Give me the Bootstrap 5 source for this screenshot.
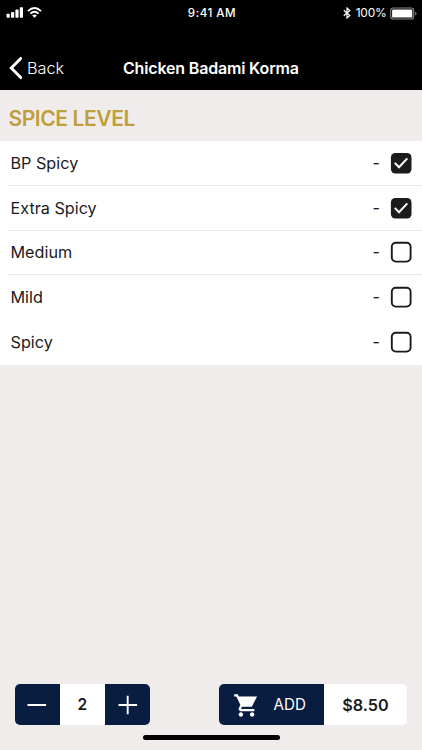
<!DOCTYPE html>
<html lang="en">
<head>
<meta charset="utf-8">
<meta name="viewport" content="width=device-width, initial-scale=1">
<title>Chicken Badami Korma</title>
<link href="https://cdn.jsdelivr.net/npm/bootstrap@5.3.0/dist/css/bootstrap.min.css" rel="stylesheet">
<style>
body{font-family:Inter,"Liberation Sans",sans-serif;background:#f0eceb;color:#1b1a1c;height:750px;overflow:hidden;line-height:1}
svg{display:block;flex:none}
.app-head{height:90px;background:#000;color:#fff}
.status{height:26px;padding:0 6px}
.side{width:120px}
.clock{font-size:11.6px;font-weight:500;letter-spacing:.5px;padding-top:2px}
.power{font-size:12px;letter-spacing:-.25px}
.power span{padding-left:5px}
.power .battery{margin-left:3.5px;margin-right:1px}
.status .power{margin-right:-2px}
.titlebar{height:44px;margin-top:20px;padding-left:8px;padding-right:8px}
.back{width:115px;font-size:16.3px;color:#fff;font-weight:300}
.dish{font-size:16px;font-weight:600;letter-spacing:-.17px;white-space:nowrap}
.section-title{height:51px;padding:6px 0 0 8.4px;font-size:21px;font-weight:600;color:#bf9f3b;letter-spacing:-.4px}
.option{height:44.8px;padding-left:2.5px;padding-right:10px;font-size:16.2px}
.option.lifted{padding-bottom:1px}
.ruled{border-bottom:1.4px solid #e8e8e8}
.box{margin-left:10px}
.order{padding:0 15px 0 14.5px;margin-bottom:10px}
.pill{height:41px;border-radius:5px;overflow:hidden}
.step{width:45px;padding:0;background:#081d40;border:0}
.qty{width:45.5px;font-size:15.5px;font-weight:600;padding-top:1px}
.add{width:105px;background:#081d40;color:#fff;border:0;font-size:15.2px;padding:1px 0 0 14px}
.add span{padding-left:13.5px;padding-top:1px}
.price{width:83px;font-size:16.2px;font-weight:600;padding-top:1px}
.home-bar{width:137px;height:5px;border-radius:3px;background:#000;margin-bottom:10px}
</style>
<script src="https://cdn.jsdelivr.net/npm/bootstrap@5.3.0/dist/js/bootstrap.bundle.min.js"></script>
</head>
<body class="d-flex flex-column m-0">
<header class="app-head">
  <div class="status d-flex align-items-center justify-content-between">
    <div class="side d-flex">
      <svg width="38" height="14" viewBox="0 0 38 14" fill="#fff"><rect x=".6" y="7.7" width="3.2" height="4" rx=".6"/><rect x="5" y="6" width="3.2" height="5.7" rx=".6"/><rect x="9.4" y="3.6" width="3.2" height="8.1" rx=".6"/><rect x="13.8" y="1.2" width="3.2" height="10.5" rx=".6"/><g fill="none" stroke="#fff" stroke-width="1.9"><path d="M22 5.1Q28.5-1 35 5.1M24.4 7.6Q28.5 3.8 32.6 7.6"/></g><path d="M26.2 9.4Q28.5 7.5 30.8 9.4L28.5 11.8Z"/></svg>
    </div>
    <span class="clock">9:41 AM</span>
    <div class="side d-flex align-items-center justify-content-end power">
      <svg width="8" height="12" viewBox="0 0 8 12" fill="none" stroke="#fff" stroke-width="1.2"><path d="M.8 3.2 6.8 8.5 4 11V1L6.8 3.5.8 8.8"/></svg>
      <span>100%</span>
      <svg class="battery" width="27" height="13" viewBox="0 0 27 13"><rect x=".7" y="1" width="23" height="11" rx="2.6" fill="none" stroke="#888" stroke-width="1.1"/><rect x="2.1" y="2.4" width="20.2" height="8.2" rx="1.2" fill="#fff"/><path d="M25.2 4.5q1.3.5 1.3 2t-1.3 2z" fill="#888"/></svg>
    </div>
  </div>
  <nav class="titlebar d-flex align-items-center">
    <a href="#" class="back d-flex align-items-center text-decoration-none"><svg width="19" height="24" viewBox="0 0 19 24" fill="none" stroke="#fff" stroke-width="2.9" stroke-linecap="round"><path d="M12.7 2.4 3.3 12l9.4 9.6"/></svg><span>Back</span></a>
    <span class="dish">Chicken Badami Korma</span>
  </nav>
</header>
<main>
  <h1 class="section-title d-flex align-items-center m-0">SPICE LEVEL</h1>
  <div class="bg-white ps-2">
    <div class="option ruled d-flex align-items-center"><span class="me-auto">BP Spicy</span><span>-</span><svg class="box" width="22" height="22" viewBox="0 0 22 22"><rect x=".9" y=".9" width="20.6" height="20.6" rx="4.5" fill="#1b1a1c"/><path d="m4.8 10.9 4.2 4.3 8.3-8.8" fill="none" stroke="#fff" stroke-width="2"/></svg></div>
    <div class="option ruled d-flex align-items-center"><span class="me-auto">Extra Spicy</span><span>-</span><svg class="box" width="22" height="22" viewBox="0 0 22 22"><rect x=".9" y=".9" width="20.6" height="20.6" rx="4.5" fill="#1b1a1c"/><path d="m4.8 10.9 4.2 4.3 8.3-8.8" fill="none" stroke="#fff" stroke-width="2"/></svg></div>
    <div class="option ruled d-flex align-items-center"><span class="me-auto">Medium</span><span>-</span><svg class="box" width="22" height="22" viewBox="0 0 22 22"><rect x="1.8" y="1.8" width="18.8" height="18.8" rx="4" fill="#fff" stroke="#1b1a1c" stroke-width="1.9"/></svg></div>
    <div class="option lifted d-flex align-items-center"><span class="me-auto">Mild</span><span>-</span><svg class="box" width="22" height="22" viewBox="0 0 22 22"><rect x="1.8" y="1.8" width="18.8" height="18.8" rx="4" fill="#fff" stroke="#1b1a1c" stroke-width="1.9"/></svg></div>
    <div class="option lifted d-flex align-items-center"><span class="me-auto">Spicy</span><span>-</span><svg class="box" width="22" height="22" viewBox="0 0 22 22"><rect x="1.8" y="1.8" width="18.8" height="18.8" rx="4" fill="#fff" stroke="#1b1a1c" stroke-width="1.9"/></svg></div>
  </div>
</main>
<footer class="mt-auto">
  <div class="order d-flex justify-content-between">
    <div class="pill d-flex bg-white">
      <button class="step btn rounded-0 d-flex align-items-center justify-content-center" aria-label="Decrease"><svg width="20" height="20" viewBox="0 0 20 20" stroke="#fff" stroke-width="1.9"><path d="M.5 10h18.6"/></svg></button>
      <span class="qty d-flex align-items-center justify-content-center">2</span>
      <button class="step btn rounded-0 d-flex align-items-center justify-content-center" aria-label="Increase"><svg width="20" height="20" viewBox="0 0 20 20" stroke="#fff" stroke-width="1.9"><path d="M.5 10h18.6M9.7.7v18.6"/></svg></button>
    </div>
    <div class="pill d-flex bg-white">
      <button class="add btn rounded-0 d-flex align-items-center"><svg width="27" height="27" viewBox="0 0 24 24" fill="#fff"><path d="M7 18c-1.1 0-1.99.9-1.99 2S5.9 22 7 22s2-.9 2-2-.9-2-2-2zM1 2v2h2l3.6 7.59-1.35 2.45c-.16.28-.25.61-.25.96 0 1.1.9 2 2 2h12v-2H7.42c-.14 0-.25-.11-.25-.25l.03-.12.9-1.63h8.6L21.4 4H5.21l-.94-2H1zm16 16c-1.1 0-1.99.9-1.99 2s.89 2 1.99 2 2-.9 2-2-.9-2-2-2z"/></svg><span>ADD</span></button>
      <span class="price d-flex align-items-center justify-content-center">$8.50</span>
    </div>
  </div>
  <div class="home-bar mx-auto"></div>
</footer>
</body>
</html>
